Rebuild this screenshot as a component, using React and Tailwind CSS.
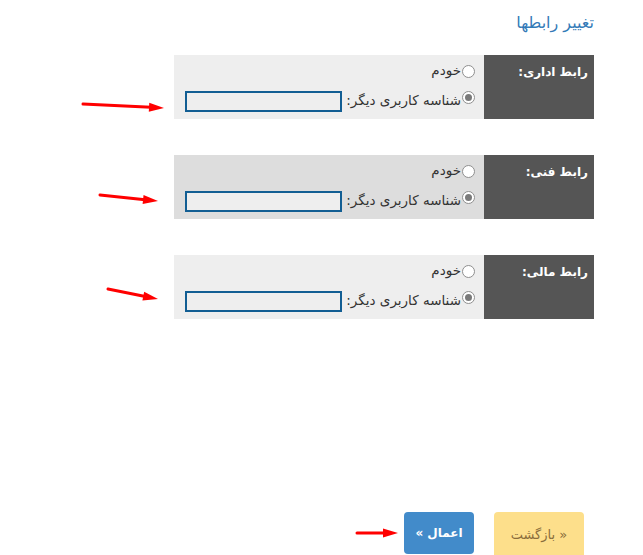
import React from 'react';

const rows = [
  { label: 'رابط اداری:', bg: 'bg-[#eeeeee]' },
  { label: 'رابط فنی:', bg: 'bg-[#dddddd]' },
  { label: 'رابط مالی:', bg: 'bg-[#eeeeee]' },
];

function Radio({ checked }) {
  return (
    <span className="inline-flex h-[13px] w-[13px] shrink-0 items-center justify-center rounded-full border border-[#8f8f8f] bg-white">
      {checked && <span className="h-[7px] w-[7px] rounded-full bg-[#7a7a7a]" />}
    </span>
  );
}

function ContactRow({ label, bg }) {
  return (
    <div className="flex h-[64px] w-[420px]">
      <div className="w-[110px] shrink-0 bg-[#555555] pr-[6px] pt-[8px] text-[12px] font-bold text-white">
        {label}
      </div>
      <div className={`flex-1 ${bg} pr-[9px] pt-[9px] text-[13.5px] text-[#333]`}>
        <div className="flex h-[14px] items-center gap-[1px]">
          <Radio />
          <span className="leading-none">خودم</span>
        </div>
        <div className="mt-[13px] flex items-start gap-[1px]">
          <Radio checked />
          <span className="pt-[3px] leading-none">شناسه کاربری دیگر:</span>
          <input
            type="text"
            className="mr-[3px] h-[21px] w-[157px] border-2 border-[#125e93] bg-[#eeeeee] outline-none"
          />
        </div>
      </div>
    </div>
  );
}

function Arrows() {
  const arrows = [
    [83, 104, 164, 108],
    [100, 195, 158, 201],
    [108, 289, 158, 299],
    [357, 533, 398, 533],
  ];
  return (
    <svg className="pointer-events-none absolute left-0 top-0" width="643" height="555">
      {arrows.map(([x1, y1, x2, y2], i) => {
        const a = Math.atan2(y2 - y1, x2 - x1);
        const len = 15;
        const w = 4.5;
        const bx = x2 - len * Math.cos(a);
        const by = y2 - len * Math.sin(a);
        const px = -Math.sin(a) * w;
        const py = Math.cos(a) * w;
        return (
          <g key={i}>
            <line x1={x1} y1={y1} x2={bx + 2 * Math.cos(a)} y2={by + 2 * Math.sin(a)} stroke="#ff0000" strokeWidth="3" strokeLinecap="round" />
            <polygon points={`${x2},${y2} ${bx + px},${by + py} ${bx - px},${by - py}`} fill="#ff0000" />
          </g>
        );
      })}
    </svg>
  );
}

export default function App() {
  return (
    <div
      dir="rtl"
      className="relative h-[555px] w-[643px] overflow-hidden bg-white"
      style={{ fontFamily: '"DejaVu Sans", sans-serif' }}
    >
      <div className="mr-[49px] w-[420px]">
        <div className="pt-[11px] text-[16px] leading-[24px] text-[#337ab7]">تغییر رابطها</div>
        <div className="mt-[20px] flex flex-col gap-[36px]">
          {rows.map((r) => (
            <ContactRow key={r.label} label={r.label} bg={r.bg} />
          ))}
        </div>
        <div className="mt-[193px] flex gap-[20px] pr-[10px]">
          <button className="h-[46px] w-[90px] rounded-[4px] bg-[#fddf8b] text-[13px] text-[#8a6d3b]">
            « بازگشت
          </button>
          <button className="h-[42px] w-[70px] rounded-[4px] bg-[#428bca] text-[12px] font-bold text-white">
            اعمال »
          </button>
        </div>
      </div>
      <Arrows />
    </div>
  );
}
